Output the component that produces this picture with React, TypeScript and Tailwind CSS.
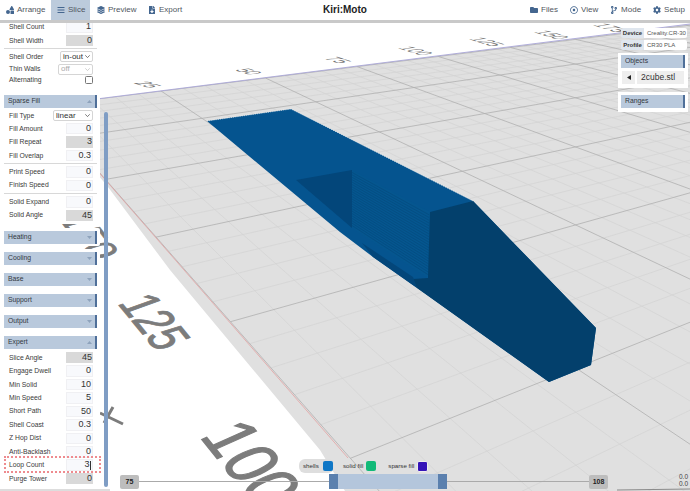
import React from "react";
import { FaShapes, FaBars, FaLayerGroup, FaFileDownload, FaFolder, FaRegDotCircle, FaCodeBranch, FaCog } from "react-icons/fa";

const A = [41, 106];
const VP1 = [-161, -124];
const VP2 = [1766, -109];
const w1 = 0.0748;
const w2 = -0.605;
const P = (u: number, v: number) => {
  const w = u * w1 + v * w2 + 1;
  return [
    (u * w1 * VP2[0] + v * w2 * VP1[0] + A[0]) / w,
    (u * w1 * VP2[1] + v * w2 * VP1[1] + A[1]) / w,
  ];
};
const seg = (a: number[], b: number[]) => `M${a[0].toFixed(1)} ${a[1].toFixed(1)}L${b[0].toFixed(1)} ${b[1].toFixed(1)}`;

function gridPaths() {
  let minor = "";
  let major = "";
  const vMax = 1.32;
  for (let i = 0; i <= 200; i++) {
    const u = i / 5;
    const d = seg(P(u, 0), P(u, vMax));
    if (i % 5 === 0) major += d;
    else minor += d;
  }
  for (let i = 0; i <= 33; i++) {
    const v = i * 0.04;
    const d = seg(P(0, v), P(40, v));
    if (i % 5 === 0) major += d;
    else minor += d;
  }
  return { minor, major };
}

function stripes() {
  let d = "";
  for (let i = 1; i < 24; i++) {
    const t = i / 24;
    d += `M352 ${170 + 58 * t}L${429} ${212 + 66 * t}`;
  }
  return d;
}

const smallLabels: [string, number, number][] = [
  ["25", 133, 83],
  ["50", 234, 70],
  ["75", 323, 58.5],
  ["100", 397, 48],
  ["125", 468, 39],
  ["150", 533, 32],
  ["175", 592, 25],
];

function Scene() {
  const { minor, major } = gridPaths();
  return (
    <svg className="absolute inset-0 w-[690px] h-[491px]" viewBox="0 0 690 491">
      <defs>
        <clipPath id="plate">
          <path d="M41 106L690 24V491H345L320 450L170 270L108 187Z" />
        </clipPath>
      </defs>
      <rect width="690" height="491" fill="#ffffff" />
      <path d="M41 106L690 24V491H345L320 450L170 270L108 187Z" fill="#e0e0e0" />
      <g clipPath="url(#plate)" fill="none">
        <path d={minor} stroke="#d3d3d3" strokeWidth="0.7" />
        <path d={major} stroke="#b0b0b0" strokeWidth="0.8" />
        <path d="M617 490L690 489" stroke="#8a8a8a" strokeWidth="1" />
      </g>
      <path d="M41 106L690 24" stroke="#a9a6d8" strokeWidth="0.9" fill="none" />
      <path d="M41 106L348 458" stroke="#e49a9a" strokeWidth="0.7" fill="none" />

      {smallLabels.map(([t, x, y]) => (
        <text key={t} transform={`matrix(1.44 0.45 -1.96 0.28 ${x} ${y})`} fontFamily="'Liberation Sans', sans-serif" fontSize="10" fill="#777777">
          {t}
        </text>
      ))}
      <text transform="matrix(2 2.6 -4.2 1.1 58 218)" fontFamily="'Liberation Sans', sans-serif" fontSize="10" fill="#7c7c7c" stroke="#7c7c7c" strokeWidth="0.2">150</text>
      <text transform="matrix(2.43 2.97 -5.03 1.82 117 303)" fontFamily="'Liberation Sans', sans-serif" fontSize="10" fill="#7c7c7c" stroke="#7c7c7c" strokeWidth="0.2">125</text>
      <text transform="matrix(3.6 4.5 -6.56 2.93 199 436)" fontFamily="'Liberation Sans', sans-serif" fontSize="10" fill="#7c7c7c" stroke="#7c7c7c" strokeWidth="0.2">100</text>
      <path d="M100 413L123 424M113 407L104 423" stroke="#7c7c7c" strokeWidth="3" fill="none" />

      <path d="M207 121L291 109L473 201L596 328L591 365L549 382L420 290L373 257L340 232Z" fill="#05548f" />
      <path d="M296 180L352 170V228Z" fill="#03467a" />
      <path d="M352 170L430 212L428 278L352 228Z" fill="#05568f" />
      <path d={stripes()} stroke="#044b7e" strokeWidth="0.7" fill="none" />
      <path d="M430 212L473 201L596 328L591 365L549 382L417 288L413 279L428 278Z" fill="#03406c" />
      <path d="M362 243L413 277L417 288L373 257Z" fill="#03467a" />
      <path d="M207 121L291 109L473 201" stroke="#ffffff" strokeWidth="0.6" strokeDasharray="1 1.2" fill="none" />
    </svg>
  );
}

function NavItem({ icon, label, active, cls }: { icon: React.ReactNode; label: string; active?: boolean; cls: string }) {
  return (
    <div className={`flex items-center h-[20px] text-[8px] text-[#50565e] ${active ? "bg-[#bccbdc]" : ""} ${cls}`}>
      <span className="text-[#44668f] text-[8px] flex items-center mr-[3px]">{icon}</span>
      {label}
    </div>
  );
}

function Header() {
  return (
    <div className="relative h-[23px] bg-white border-b-[3px] border-[#c9c9c9] shrink-0">
      <div className="flex justify-between h-[20px]">
        <div className="flex">
          <NavItem icon={<FaShapes />} label="Arrange" cls="pl-[6px] w-[51px]" />
          <NavItem icon={<FaBars />} label="Slice" active cls="pl-[6px] w-[39px]" />
          <NavItem icon={<FaLayerGroup />} label="Preview" cls="pl-[7px] w-[51px]" />
          <NavItem icon={<FaFileDownload />} label="Export" cls="pl-[7px]" />
        </div>
        <div className="flex pr-[5px]">
          <NavItem icon={<FaFolder />} label="Files" cls="w-[40px]" />
          <NavItem icon={<FaRegDotCircle />} label="View" cls="w-[40px]" />
          <NavItem icon={<FaCodeBranch />} label="Mode" cls="w-[43px]" />
          <NavItem icon={<FaCog />} label="Setup" cls="" />
        </div>
      </div>
      <div className="absolute left-[323px] top-[3px] text-[10px] font-bold text-[#222] leading-[14px]">Kiri:Moto</div>
    </div>
  );
}

function SectionHeader({ label, open, plain }: { label: string; open?: boolean; plain?: boolean }) {
  return (
    <div className="flex items-center justify-between h-[13px] bg-[#b9c9dc] border-r-2 border-[#4f6f99] pl-[4px] pr-[3px] text-[6.8px] text-[#33383e]">
      <span>{label}</span>
      {!plain && (
        <svg width="5" height="3" viewBox="0 0 5 3">
          <path d={open ? "M0 3L2.5 0L5 3Z" : "M0 0L2.5 3L5 0Z"} fill="#8ea3bc" />
        </svg>
      )}
    </div>
  );
}

function Closed({ label }: { label: string }) {
  return (
    <div className="bg-white rounded-[2px] w-[99px] h-[18px] pt-[3px] px-[3px] mb-[3px]">
      <SectionHeader label={label} />
    </div>
  );
}

function NumRow({ label, value, calc, cursor }: { label: string; value: string; calc?: boolean; cursor?: boolean }) {
  return (
    <div className="flex items-center justify-between h-[13.45px] pl-[8px] pr-[7px] text-[6.8px] text-[#3a3a3a]">
      <span>{label}</span>
      <div className={`flex items-center justify-end w-[27px] h-[11.5px] pr-[1px] text-[9px] text-[#333] ${calc ? "bg-[#d9d9d9]" : "bg-[#f8f9fc] border border-[#f0f0f3]"}`}>
        {value}
        {cursor && <span className="w-px h-[9px] bg-[#333] ml-[0.5px]" />}
      </div>
    </div>
  );
}

function SelectRow({ label, value, w, disabled }: { label: string; value: string; w: string; disabled?: boolean }) {
  return (
    <div className="flex items-center justify-between h-[12.5px] pl-[8px] pr-[7px] text-[6.8px] text-[#3a3a3a]">
      <span>{label}</span>
      <div className={`flex items-center justify-between h-[11px] border border-[#d5d5d5] rounded-[2px] px-[2px] text-[8px] ${w} ${disabled ? "text-[#aaa]" : "text-[#333]"}`}>
        <span>{value}</span>
        <svg width="5" height="3" viewBox="0 0 5 3">
          <path d="M0.3 0.3L2.5 2.6L4.7 0.3" stroke={disabled ? "#bbb" : "#444"} strokeWidth="0.7" fill="none" />
        </svg>
      </div>
    </div>
  );
}

const Divider = () => <div className="h-px bg-[#d8d8d8] mx-[3px] my-px" />;

function Sidebar() {
  return (
    <div className="relative w-[108px] h-[464px] overflow-hidden shrink-0">
      <div className="absolute left-[104px] top-[89px] w-[4px] h-[375px] rounded-full bg-[#7f9dc4]" />
      <div className="w-[100px] pl-px">
        <div className="bg-white rounded-b-[2px] w-[99px] h-[67.5px] mb-[4px] overflow-hidden -mt-[2.5px]">
          <NumRow label="Shell Count" value="1" />
          <NumRow label="Shell Width" value="0" calc />
          <Divider />
          <SelectRow label="Shell Order" value="in-out" w="w-[33px]" />
          <SelectRow label="Thin Walls" value="off" w="w-[35px]" disabled />
          <div className="flex items-center justify-between h-[10px] pl-[8px] pr-[7px] text-[6.8px] text-[#3a3a3a]">
            <span>Alternating</span>
            <span className="w-[8px] h-[8px] bg-white border border-[#777] rounded-[1.5px]" />
          </div>
        </div>
        <div className="bg-white rounded-[2px] w-[99px] h-[132px] pt-[3px] mb-[4px]">
          <div className="px-[3px] mb-[1.5px]"><SectionHeader label="Sparse Fill" open /></div>
          <SelectRow label="Fill Type" value="linear" w="w-[40px]" />
          <NumRow label="Fill Amount" value="0" />
          <NumRow label="Fill Repeat" value="3" calc />
          <NumRow label="Fill Overlap" value="0.3" />
          <Divider />
          <NumRow label="Print Speed" value="0" />
          <NumRow label="Finish Speed" value="0" />
          <Divider />
          <NumRow label="Solid Expand" value="0" />
          <NumRow label="Solid Angle" value="45" calc />
        </div>
        <Closed label="Heating" />
        <Closed label="Cooling" />
        <Closed label="Base" />
        <Closed label="Support" />
        <div className="mb-[4px]"><div className="bg-white rounded-[2px] w-[99px] h-[18px] pt-[3px] px-[3px]"><SectionHeader label="Output" /></div></div>
        <div className="relative bg-white rounded-[2px] w-[99px] h-[153px] pt-[2px]">
          <div className="px-[3px] mb-[2px]"><SectionHeader label="Expert" open /></div>
          <NumRow label="Slice Angle" value="45" calc />
          <NumRow label="Engage Dwell" value="0" />
          <NumRow label="Min Solid" value="10" />
          <NumRow label="Min Speed" value="5" />
          <NumRow label="Short Path" value="50" />
          <NumRow label="Shell Coast" value="0.3" />
          <NumRow label="Z Hop Dist" value="0" />
          <NumRow label="Anti-Backlash" value="0" />
          <NumRow label="Loop Count" value="3" cursor />
          <NumRow label="Purge Tower" value="0" calc />
          <div className="absolute left-[3px] top-[122px] w-[97px] h-[17px] border-2 border-dotted border-[#ee8b8f]" />
        </div>
      </div>
    </div>
  );
}

function RightPanel() {
  return (
    <div className="w-[71px] pt-[5px] mr-px">
      {[["Device", "Creality.CR-30"], ["Profile", "CR30 PLA"]].map(([k, v]) => (
        <div key={k} className="flex h-[10px] mb-[2px] ml-[3px] mr-[2px] text-[6px] leading-[10px]">
          <div className="w-[23px] bg-[#dfe6ee] font-bold text-[#333] text-center rounded-l-[2px]">{k}</div>
          <div className="flex-1 bg-white text-[#555] pl-[3px] rounded-r-[2px] whitespace-nowrap overflow-hidden">{v}</div>
        </div>
      ))}
      <div className="bg-white w-[70px] h-[35px] mt-[3px] px-[3px] pt-[2px]">
        <SectionHeader label="Objects" plain />
        <div className="flex gap-[2px] mt-[3px] ml-px">
          <div className="flex items-center justify-center w-[13px] h-[13px] bg-[#eeeeee]">
            <svg width="4" height="5" viewBox="0 0 4 5"><path d="M4 0V5L0 2.5Z" fill="#222" /></svg>
          </div>
          <div className="w-[47px] h-[13px] bg-[#eeeeee] text-[8.5px] leading-[13px] text-[#333] pl-[4px]">2cube.stl</div>
        </div>
      </div>
      <div className="bg-white w-[70px] h-[20px] mt-[4px] px-[3px] pt-[3px]">
        <SectionHeader label="Ranges" plain />
      </div>
    </div>
  );
}

function Legend() {
  return (
    <div className="absolute left-[299px] top-[459px] flex items-center h-[14px] text-[6.2px] text-[#333]">
      <div className="flex items-center gap-[4px] h-[14px] w-[35px] pl-[4px] bg-[#dedede] rounded-[6px]">
        <span>shells</span>
        <span className="w-[10px] h-[10px] rounded-[2px] bg-[#0f77c6]" />
      </div>
      <div className="flex items-center gap-[3px] ml-[9px]">
        <span>solid fill</span>
        <span className="w-[10px] h-[10px] rounded-[2px] bg-[#12ba78]" />
      </div>
      <div className="flex items-center gap-[3px] ml-[12px]">
        <span>sparse fill</span>
        <span className="w-[11px] h-[11px] rounded-[2px] bg-[#3514b8] border border-[#eeeeee]" />
      </div>
    </div>
  );
}

function Slider() {
  return (
    <div className="absolute left-[120px] top-[474px] flex items-center w-[488px] h-[15px]">
      <div className="w-[19px] h-[14px] rounded-[2px] bg-[#bdbdbd] text-[7px] font-bold text-center leading-[14px] text-[#222]">75</div>
      <div className="w-[190px] h-px bg-[#aaaaaa]" />
      <div className="w-[9px] h-[15px] bg-[#5b80ae]" />
      <div className="w-[100px] h-[15px] bg-[#b4c6dc]" />
      <div className="w-[9px] h-[15px] bg-[#5b80ae]" />
      <div className="w-[142px] h-px bg-[#aaaaaa]" />
      <div className="w-[19px] h-[14px] rounded-[2px] bg-[#bdbdbd] text-[7px] font-bold text-center leading-[14px] text-[#222]">108</div>
    </div>
  );
}

export default function App() {
  return (
    <div className="relative w-[690px] h-[491px] overflow-hidden font-['Liberation_Sans',Arial,sans-serif]">
      <Scene />
      <div className="relative flex flex-col h-full">
        <Header />
        <div className="flex justify-between">
          <Sidebar />
          <RightPanel />
        </div>
      </div>
      <Legend />
      <Slider />
      <div className="absolute left-[679px] top-[473px] text-[6.5px] leading-[7px] text-[#444]">
        <div>0.0</div>
        <div>0.0</div>
      </div>
      <div className="absolute left-0 bottom-0 w-[110px] h-[2px] bg-[#dddddd]" />
    </div>
  );
}
